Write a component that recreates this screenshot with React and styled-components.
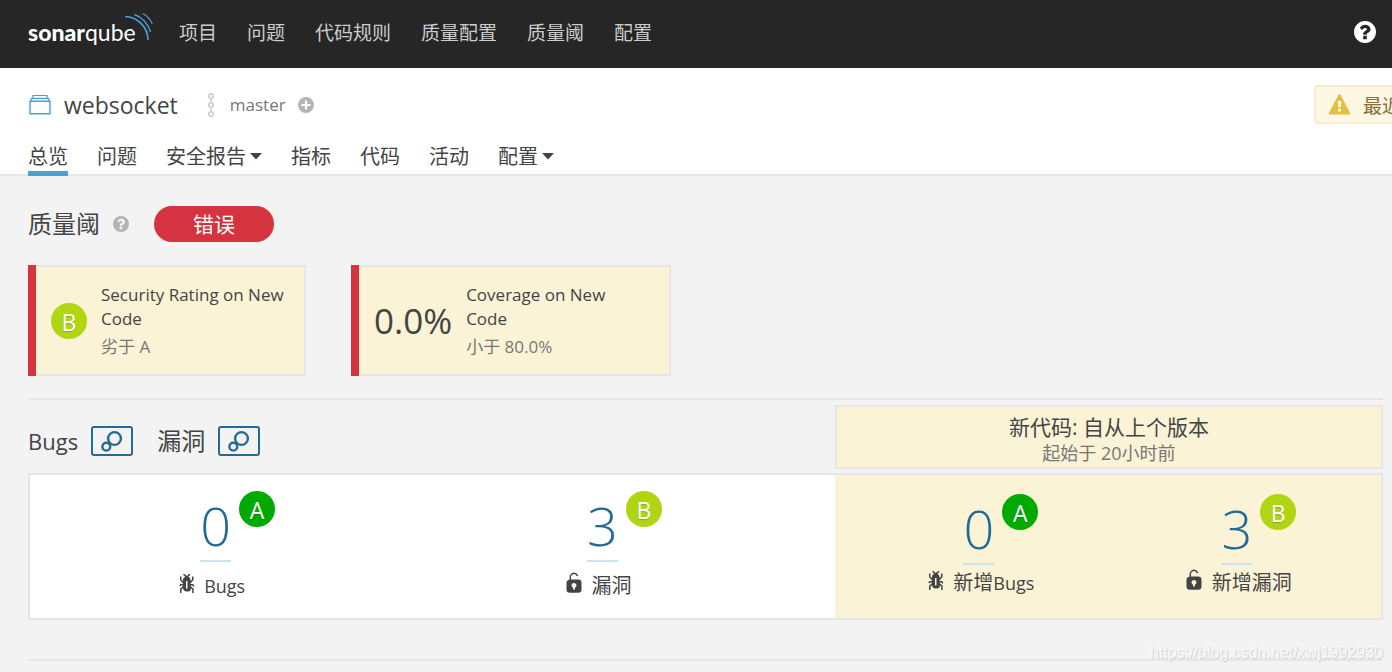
import styled, { createGlobalStyle } from 'styled-components'

const GlobalStyle = createGlobalStyle`
  * {
    box-sizing: border-box;
  }

  body {
    background-color: #f3f3f3;
    color: #444;
    font-family: 'Open Sans', 'Noto Sans CJK SC', sans-serif;
    margin: 0;
  }

  a {
    color: inherit;
    text-decoration: none;
  }

  svg {
    display: block;
    flex: none;
  }
`

const Page = styled.div`
  min-height: 100vh;
  overflow: hidden;
  position: relative;
`

const GlobalNav = styled.header`
  align-items: center;
  background-color: #262626;
  display: flex;
  height: 68px;
  padding: 0 16px 4px 28px;
`

const Brand = styled.a`
  color: #fff;
  display: flex;
  font-family: Lato, sans-serif;
  font-size: 23px;
  line-height: 28px;
  position: relative;
  width: 151px;
`

const BrandStrong = styled.span`
  font-weight: 900;
`

const BrandWaves = styled.svg`
  left: 96px;
  position: absolute;
  top: -6px;
`

const Menu = styled.nav`
  display: flex;
  flex: 1;
  gap: 30px;
  padding-top: 2px;
`

const MenuLink = styled.a`
  color: #ccc;
  font-size: 19px;
  line-height: 28px;
`

const IconButton = styled.button`
  background: none;
  border: 0;
  color: ${props => props.$color};
  cursor: pointer;
  padding: 0;
`

const ContextNav = styled.div`
  background-color: #fff;
  border-bottom: 2px solid #e6e6e6;
  padding: 17px 0 0 28px;
`

const ContextRow = styled.div`
  display: flex;
  justify-content: space-between;
`

const Project = styled.div`
  align-items: center;
  display: flex;
`

const ProjectName = styled.a`
  font-size: 23px;
  line-height: 32px;
  margin: 0 22px 0 12px;
`

const Branch = styled.span`
  color: #777;
  font-size: 17px;
  line-height: 24px;
  margin: 0 12px 0 8px;
`

const Notice = styled.div`
  align-items: center;
  background-color: #fcf8e3;
  border: 2px solid #faebcc;
  border-radius: 4px 0 0 4px;
  border-right: 0;
  color: #8a6d3b;
  display: flex;
  flex: 0 0 78px;
  font-size: 19px;
  gap: 12px;
  height: 39px;
  overflow: hidden;
  padding-left: 12px;
  white-space: nowrap;
`

const Tabs = styled.nav`
  display: flex;
  gap: 29px;
  margin-bottom: -2px;
  padding-top: 16px;
`

const Tab = styled.a`
  align-items: center;
  border-bottom: 5px solid ${props => props.$active ? '#4b9fd5' : 'transparent'};
  display: flex;
  font-size: 20px;
  gap: 4px;
  height: 36px;
  line-height: 28px;
  padding-top: 2px;
`

const Content = styled.main`
  padding: 30px 9px 0 28px;
`

const GateHeader = styled.div`
  align-items: center;
  display: flex;
`

const Title = styled.h2`
  font-size: ${props => props.$latin ? '22px' : '24px'};
  font-weight: 400;
  line-height: 32px;
  margin: 0;
`

const GateHelp = styled(IconButton)`
  margin: 0 25px 0 13px;
`

const Level = styled.span`
  background-color: #d4333f;
  border-radius: 18px;
  color: #fff;
  font-size: 21px;
  line-height: 36px;
  text-align: center;
  width: 120px;
`

const Conditions = styled.div`
  display: flex;
  gap: 45px;
  padding: 23px 0 22px;
`

const Condition = styled.a`
  background-color: #d4333f;
  display: block;
  padding-left: 8px;
`

const ConditionBody = styled.div`
  align-items: center;
  background-color: #faf3d5;
  border: 2px solid #e6e6e6;
  border-left: 0;
  display: flex;
  gap: 14px;
  height: 111px;
  padding: 0 19px 0 15px;
`

const ConditionValue = styled.span`
  font-size: 35px;
  line-height: 44px;
`

const ConditionText = styled.div`
  font-size: 17px;
  line-height: 24px;
  width: 184px;
`

const Threshold = styled.div`
  color: #777;
  padding-top: 4px;
`

const Rating = styled.span`
  background-color: ${props => props.$level === 'A' ? '#0a0' : '#b0d513'};
  border-radius: 50%;
  color: #fff;
  display: block;
  flex: none;
  font-size: 23px;
  height: 36px;
  line-height: 38px;
  text-align: center;
  text-shadow: 0 1px 1px rgba(0, 0, 0, 0.2);
  width: 36px;
`

const Divider = styled.hr`
  background-color: #e6e6e6;
  border: 0;
  height: 2px;
  margin: 0;
`

const Domain = styled.section`
  padding: 5px 0 39px;
`

const Split = styled.div`
  display: grid;
  grid-template-columns: 807fr 548fr;
`

const DomainTitles = styled.div`
  align-items: center;
  display: flex;
  gap: 13px;
  padding-top: 8px;
`

const BubblesButton = styled.button`
  align-items: center;
  background: none;
  border: 2px solid #236a97;
  border-radius: 3px;
  cursor: pointer;
  display: flex;
  height: 30px;
  justify-content: center;
  margin-right: 11px;
  padding: 0;
  width: 42px;
`

const Legend = styled.div`
  background-color: #faf3d5;
  border: 2px solid #e6e6e6;
  font-size: 21px;
  line-height: 28px;
  padding: 6px 0 2px;
  text-align: center;
`

const LegendDate = styled.div`
  color: #777;
  font-size: 18px;
  line-height: 24px;
`

const Panel = styled(Split)`
  background-color: #fff;
  border: 2px solid #e6e6e6;
  height: 147px;
  margin-top: 4px;
`

const Measures = styled.div`
  background-color: ${props => props.$leak ? '#faf3d5' : '#fff'};
  display: grid;
  grid-template-columns: ${props => props.$leak ? '19fr 15fr 2fr' : '12fr 13fr 1fr'};
  padding-top: ${props => props.$leak ? '28px' : '25px'};
`

const MeasureCell = styled.div`
  align-items: center;
  display: flex;
  flex-direction: column;
  gap: ${props => props.$leak ? '4px' : '10px'};
`

const MeasureValue = styled.div`
  position: relative;

  ${Rating} {
    left: 100%;
    margin-left: 8px;
    position: absolute;
    top: -9px;
  }
`

const MeasureLink = styled.a`
  border-bottom: 2px solid #cae3f2;
  color: #236a97;
  display: block;
  font-size: 54px;
  font-weight: 300;
  line-height: 50px;
  padding-bottom: 10px;
  text-align: center;
`

const MeasureLabel = styled.div`
  display: flex;
  font-size: 20px;
  gap: 6px;
  line-height: 28px;
  padding-right: ${props => props.$leak ? '0' : '12px'};
`

const Latin = styled.span`
  font-size: 18px;
`

const Watermark = styled.div`
  bottom: 8px;
  color: #f8f8f8;
  font-family: 'Liberation Sans', sans-serif;
  font-size: 16px;
  line-height: 22px;
  position: absolute;
  right: 9px;
  text-shadow: 1px 1px 1px #ccc;
`

const HelpIcon = ({ size }) => (
  <svg width={size} height={size} viewBox='1 1 14 14' fill='currentColor' fillRule='evenodd'>
    <path d='M8 1a7 7 0 1 1 0 14A7 7 0 0 1 8 1zM9.167 12.375v-1.75q0-.128-.082-.21t-.21-.082h-1.75q-.128 0-.21.082t-.082.21v1.75q0 .128.082.21t.21.082h1.75q.128 0 .21-.082t.082-.21zM11.5 6.25q0-.802-.506-1.486t-1.262-1.058-1.549-.374q-2.214 0-3.378 1.941-.137.219.073.383l1.203.911q.064.055.173.055.146 0 .228-.109.483-.62.784-.839.31-.219.784-.219.438 0 .779.237t.342.538q0 .346-.182.556t-.62.41q-.574.255-1.053.788t-.479 1.144v.328q0 .128.082.21t.21.082h1.75q.128 0 .21-.082t.082-.21q0-.173.196-.451t.497-.451q.292-.164.447-.26t.419-.319.406-.438.255-.551.114-.738z' />
  </svg>
)

const PlusIcon = () => (
  <svg width='16' height='16' viewBox='0 0 16 16'>
    <circle cx='8' cy='8' r='8' fill='#b4b4b4' />
    <path d='M8 3.500v9M3.500 8h9' stroke='#fff' strokeWidth='2.200' />
  </svg>
)

const ProjectIcon = () => (
  <svg width='24' height='24' viewBox='0 0 24 24' fill='none' stroke='#4b9fd5' strokeWidth='1.400'>
    <path d='M2 8.200h20v12.500H2z' />
    <path d='M3.200 8V5.300h17.600V8M5 5V2.500h14V5' strokeWidth='1.200' />
  </svg>
)

const BranchIcon = () => (
  <svg width='22' height='24' viewBox='0 0 22 24' fill='none' stroke='#cdcdcd' strokeWidth='1.500'>
    <circle cx='11' cy='3' r='2.300' />
    <circle cx='11' cy='12' r='2.300' />
    <circle cx='11' cy='21' r='2.300' />
    <path d='M11 5.300v4.400M11 14.300v4.400' />
  </svg>
)

const WarningIcon = () => (
  <svg width='23' height='21' viewBox='0 0 23 21'>
    <path d='M10.500.8a1.200 1.200 0 0 1 2 0l9.500 18a1.100 1.100 0 0 1-1 1.700H2a1.100 1.100 0 0 1-1-1.700z' fill='#e2bf41' />
    <path d='M9.700 7h3.600l-.4 6.200h-2.800zM9.900 14.700h3.200v2.800H9.900z' fill='#fcf8e3' />
  </svg>
)

const Caret = () => (
  <svg width='12' height='7' viewBox='0 0 12 7'>
    <path d='M0 0h12L6 6.500z' fill='#444' />
  </svg>
)

const BubblesIcon = () => (
  <svg width='24' height='24' viewBox='0 0 24 24' fill='none' stroke='#236a97' strokeWidth='2.400'>
    <circle cx='14.500' cy='9.500' r='6.400' />
    <circle cx='6.300' cy='17.700' r='3.900' />
  </svg>
)

const BugIcon = () => (
  <svg width='24' height='24' viewBox='0 0 16 16' fill='#444'>
    <path d='M11 9h1.300l.5.8.8-.5-.8-1.300H11v-.3l2-2.300V3h-1v2l-1 1.200V5c-.1-.8-.7-1.500-1.400-1.900L11 1.800l-.7-.7-1.800 1.600-1.800-1.600-.7.7 1.500 1.300C6.700 3.500 6.100 4.200 6 5v1.100L5 5V3H4v2.300l2 2.300V8H4.200l-.7 1.200.8.5.4-.7H6v.3l-2 1.900V14h1v-2.400l1-1C6 12 7.100 13 8.400 13h.8c.7 0 1.400-.3 1.800-.9.3-.4.3-.9.2-1.400l.9.9V14h1v-2.800l-2-1.900V9zm-2 2H8V6h1v5z' />
  </svg>
)

const VulnerabilityIcon = () => (
  <svg width='24' height='24' viewBox='0 0 16 16' fill='#444'>
    <path d='M10.800 5H6V3.900a2.280 2.280 0 0 1 2-2.500 2.220 2.220 0 0 1 1.800 1.200.48.48 0 0 0 .7.2.48.48 0 0 0 .2-.7A3 3 0 0 0 8 .4a3.340 3.340 0 0 0-3 3.500v1.200a2.160 2.160 0 0 0-2 2.100v4.400a2.220 2.220 0 0 0 2.200 2.200h5.600a2.220 2.220 0 0 0 2.200-2.200V7.200A2.220 2.220 0 0 0 10.800 5zm-2.200 5.500v1.200H7.400v-1.200a1.660 1.660 0 1 1 1.200 0z' />
  </svg>
)

const Measure = ({ value, rating, icon, children, leak }) => (
  <MeasureCell $leak={leak}>
    <MeasureValue>
      <MeasureLink href='#'>{value}</MeasureLink>
      <Rating $level={rating}>{rating}</Rating>
    </MeasureValue>
    <MeasureLabel $leak={leak}>
      {icon}
      <span>{children}</span>
    </MeasureLabel>
  </MeasureCell>
)

const menu = ['项目', '问题', '代码规则', '质量配置', '质量阈', '配置']

const tabs = [
  { name: '总览', active: true },
  { name: '问题' },
  { name: '安全报告', dropdown: true },
  { name: '指标' },
  { name: '代码' },
  { name: '活动' },
  { name: '配置', dropdown: true }
]

const App = () => (
  <Page>
    <GlobalStyle />
    <GlobalNav>
      <Brand href='#'>
        <BrandStrong>sonar</BrandStrong>qube
        <BrandWaves width='30' height='30' viewBox='0 0 30 30' fill='none' stroke='#4b9fd5'>
          <path d='M1 4.500C13 4.500 24 15 24 28' strokeWidth='1.700' />
          <path d='M10.500 2.500C18 5 24.500 12 26.500 20' strokeWidth='1.400' />
          <path d='M19 1.500C23.500 4 26.500 7.500 28.300 12' strokeWidth='1.200' />
        </BrandWaves>
      </Brand>
      <Menu>
        {menu.map(name => <MenuLink key={name} href='#'>{name}</MenuLink>)}
      </Menu>
      <IconButton $color='#fff' aria-label='Help'><HelpIcon size={22} /></IconButton>
    </GlobalNav>

    <ContextNav>
      <ContextRow>
        <Project>
          <ProjectIcon />
          <ProjectName href='#'>websocket</ProjectName>
          <BranchIcon />
          <Branch>master</Branch>
          <IconButton aria-label='Branches'><PlusIcon /></IconButton>
        </Project>
        <Notice>
          <WarningIcon />
          <span>最近</span>
        </Notice>
      </ContextRow>
      <Tabs>
        {tabs.map(({ name, active, dropdown }) => (
          <Tab key={name} href='#' $active={active}>{name}{dropdown && <Caret />}</Tab>
        ))}
      </Tabs>
    </ContextNav>

    <Content>
      <GateHeader>
        <Title>质量阈</Title>
        <GateHelp $color='#b4b4b4' aria-label='Help'><HelpIcon size={16} /></GateHelp>
        <Level>错误</Level>
      </GateHeader>
      <Conditions>
        <Condition href='#'>
          <ConditionBody>
            <Rating $level='B'>B</Rating>
            <ConditionText>
              Security Rating on New Code
              <Threshold>劣于 A</Threshold>
            </ConditionText>
          </ConditionBody>
        </Condition>
        <Condition href='#'>
          <ConditionBody>
            <ConditionValue>0.0%</ConditionValue>
            <ConditionText>
              Coverage on New Code
              <Threshold>小于 80.0%</Threshold>
            </ConditionText>
          </ConditionBody>
        </Condition>
      </Conditions>
      <Divider />

      <Domain>
        <Split>
          <DomainTitles>
            <Title $latin>Bugs</Title>
            <BubblesButton aria-label='Bugs'><BubblesIcon /></BubblesButton>
            <Title>漏洞</Title>
            <BubblesButton aria-label='漏洞'><BubblesIcon /></BubblesButton>
          </DomainTitles>
          <Legend>
            新代码: 自从上个版本
            <LegendDate>起始于 20小时前</LegendDate>
          </Legend>
        </Split>
        <Panel>
          <Measures>
            <Measure value='0' rating='A' icon={<BugIcon />}><Latin>Bugs</Latin></Measure>
            <Measure value='3' rating='B' icon={<VulnerabilityIcon />}>漏洞</Measure>
          </Measures>
          <Measures $leak>
            <Measure leak value='0' rating='A' icon={<BugIcon />}>新增<Latin>Bugs</Latin></Measure>
            <Measure leak value='3' rating='B' icon={<VulnerabilityIcon />}>新增漏洞</Measure>
          </Measures>
        </Panel>
      </Domain>
      <Divider />
    </Content>
    <Watermark>https://blog.csdn.net/xwj1992930</Watermark>
  </Page>
)

export default App
